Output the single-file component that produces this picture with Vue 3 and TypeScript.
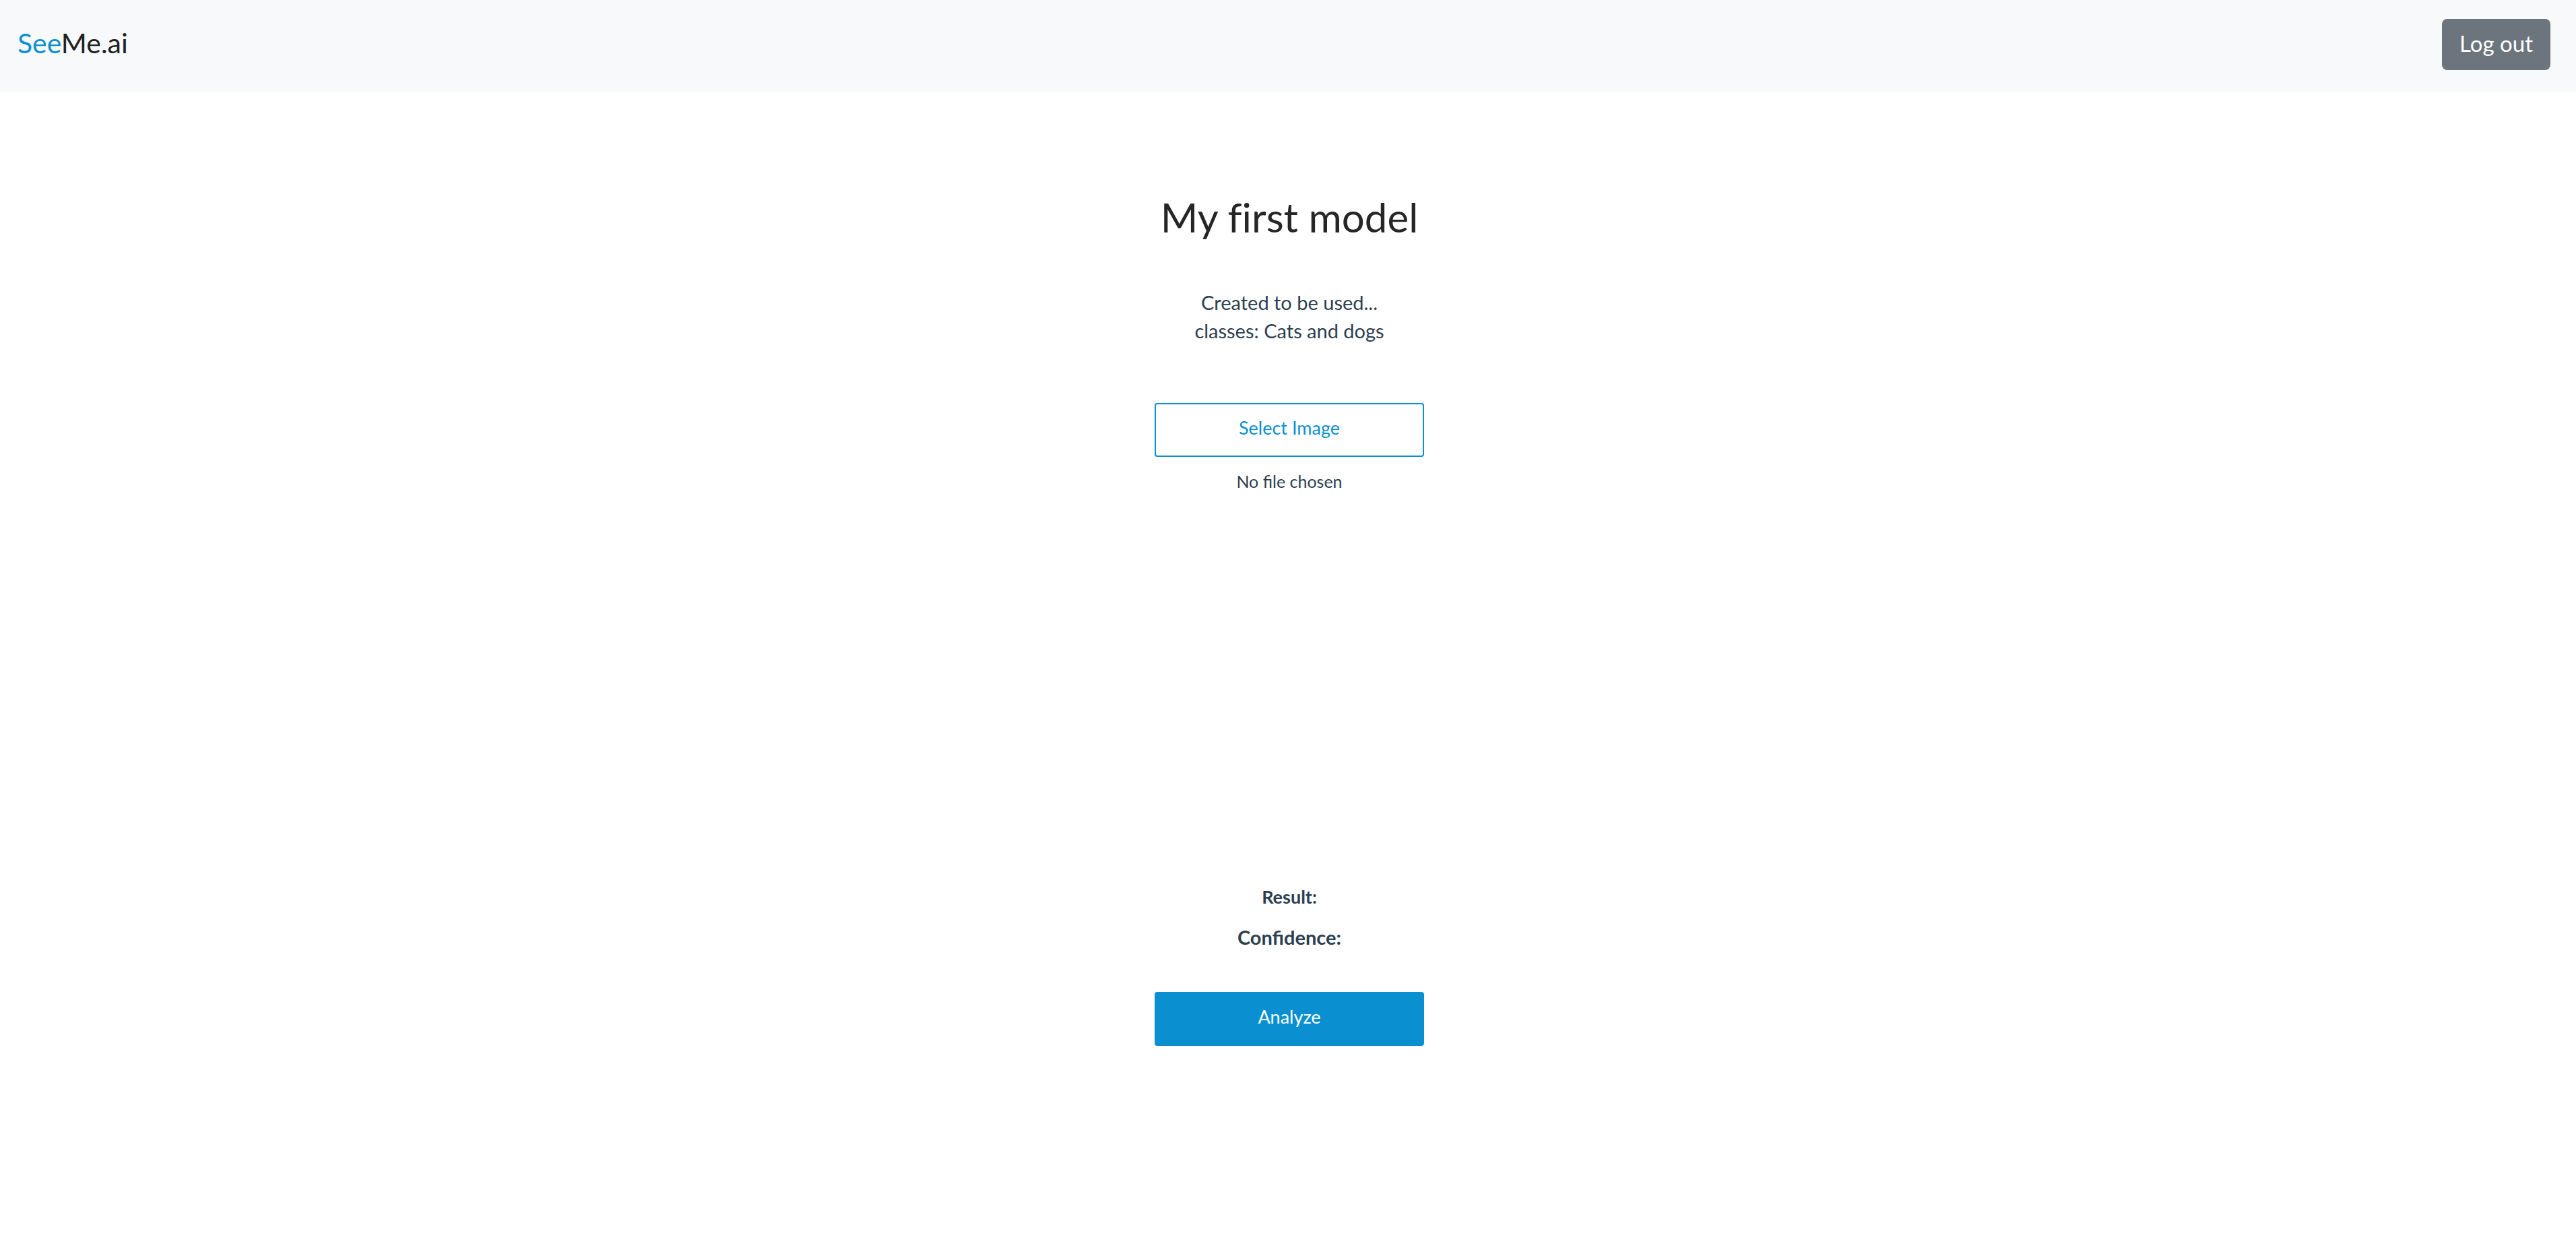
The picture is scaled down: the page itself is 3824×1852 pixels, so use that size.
<script setup lang="ts">
import { ref } from 'vue'

const picker = ref<HTMLInputElement | null>(null)
const fileName = ref('No file chosen')

function onFile(event: Event): void {
  const files = (event.target as HTMLInputElement).files
  fileName.value = files && files.length ? files[0].name : 'No file chosen'
}
</script>

<template>
  <div class="app">
    <header class="navbar">
      <a class="brand" href="#"><span class="brand-accent">See</span>Me.ai</a>
      <button class="logout" type="button">Log out</button>
    </header>

    <main class="model">
      <h1 class="title">My first model</h1>
      <p class="description">Created to be used...<br />classes: Cats and dogs</p>

      <button class="action outline" type="button" @click="picker?.click()">Select Image</button>
      <input ref="picker" type="file" accept="image/*" aria-label="Image file" hidden @change="onFile" />
      <p class="file-name">{{ fileName }}</p>

      <section class="preview" aria-label="Image preview"></section>

      <p class="result">Result:</p>
      <p class="confidence">Confidence:</p>
      <button class="action solid" type="button">Analyze</button>
    </main>
  </div>
</template>

<style>
body {
  margin: 0;
  background: #fff;
}
</style>

<style scoped>
.app {
  font-family: Avenir, Lato, 'Open Sans', sans-serif;
  color: #2c3e50;
}

.navbar {
  display: flex;
  align-items: flex-start;
  justify-content: space-between;
  box-sizing: border-box;
  height: 136px;
  padding: 28px 38px 0 26px;
  background: #f8f9fa;
}

.brand {
  font-size: 41px;
  line-height: 72px;
  color: #212121;
  text-decoration: none;
}

.brand-accent {
  color: #0a90d1;
}

.logout {
  height: 76px;
  padding: 0 26px 4px;
  border: 0;
  border-radius: 8px;
  background: #6c757d;
  color: #fff;
  font-family: inherit;
  font-size: 33px;
}

.model {
  display: flex;
  flex-direction: column;
  align-items: center;
  padding: 142px 0 64px 4px;
  text-align: center;
}

.title {
  margin: 0;
  font-size: 60px;
  font-weight: 400;
  font-variant-ligatures: none;
  line-height: 88px;
  color: #262626;
}

.description {
  margin: 62px 0 0;
  font-size: 29px;
  line-height: 42px;
}

.action {
  width: 400px;
  height: 80px;
  padding: 0 0 8px;
  border: 2px solid #0a90d1;
  border-radius: 4px;
  font-family: inherit;
  font-size: 27px;
}

.outline {
  margin-top: 86px;
  background: #fff;
  color: #0a90d1;
}

.solid {
  margin-top: 60px;
  background: #0a90d1;
  color: #fff;
}

.file-name {
  margin: 18px 0 0;
  font-size: 25px;
  line-height: 36px;
}

.preview {
  width: 400px;
  height: 580px;
}

.result,
.confidence {
  margin: 0;
  font-weight: 700;
}

.result {
  font-size: 27px;
  line-height: 38px;
}

.confidence {
  margin-top: 20px;
  font-size: 29px;
  line-height: 42px;
}
</style>
